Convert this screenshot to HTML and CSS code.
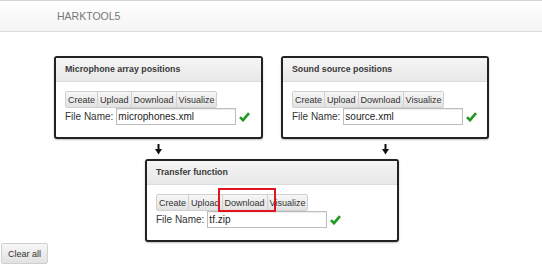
FILE: index.html
```html
<!DOCTYPE html>
<html lang="en">
<head>
<meta charset="UTF-8">
<title>HARKTOOL5</title>
<link rel="stylesheet" href="styles.css">
</head>
<body>
<div class="navbar">
<span class="brand">HARKTOOL5</span>
</div>

<div class="workspace">
<div class="row">
<div class="panel panel-left">
<div class="panel-heading">Microphone array positions</div>
<div class="panel-body">
<div class="btn-group">
<button class="btn">Create</button><button class="btn">Upload</button><button class="btn">Download</button><button class="btn">Visualize</button>
</div>
<div class="file-row">
<label>File Name:</label>
<input type="text" class="file-input" value="microphones.xml">
<svg class="check" width="11" height="10" viewBox="0 0 11 10"><path d="M1 5.2 L4 8.2 L10 1.2" fill="none" stroke="#229a22" stroke-width="2.6"/></svg>
</div>
</div>
</div>

<div class="panel panel-right">
<div class="panel-heading">Sound source positions</div>
<div class="panel-body">
<div class="btn-group">
<button class="btn">Create</button><button class="btn">Upload</button><button class="btn">Download</button><button class="btn">Visualize</button>
</div>
<div class="file-row">
<label>File Name:</label>
<input type="text" class="file-input" value="source.xml">
<svg class="check" width="11" height="10" viewBox="0 0 11 10"><path d="M1 5.2 L4 8.2 L10 1.2" fill="none" stroke="#229a22" stroke-width="2.6"/></svg>
</div>
</div>
</div>
</div>

<div class="arrows">
<div class="arrow-slot panel-left">
<svg width="7" height="11" viewBox="0 0 7 11"><rect x="2.5" y="0" width="2" height="6" fill="#111"/><path d="M0 5 L7 5 L3.5 10.5 Z" fill="#111"/></svg>
</div>
<div class="arrow-slot panel-right">
<svg width="7" height="11" viewBox="0 0 7 11"><rect x="2.5" y="0" width="2" height="6" fill="#111"/><path d="M0 5 L7 5 L3.5 10.5 Z" fill="#111"/></svg>
</div>
</div>

<div class="panel panel-tf">
<div class="panel-heading">Transfer function</div>
<div class="panel-body">
<div class="btn-group">
<button class="btn">Create</button><button class="btn">Upload</button><button class="btn">Download</button><button class="btn">Visualize</button>
</div>
<div class="file-row">
<label>File Name:</label>
<input type="text" class="file-input" value="tf.zip">
<svg class="check" width="11" height="10" viewBox="0 0 11 10"><path d="M1 5.2 L4 8.2 L10 1.2" fill="none" stroke="#229a22" stroke-width="2.6"/></svg>
</div>
</div>
<!-- annotation box round the Download button -->
<div class="highlight"></div>
</div>

<button class="btn clear-btn">Clear all</button>
</div>
</body>
</html>
```

FILE: styles.css
```css
body {
font-family: "Liberation Sans", Arial, sans-serif;
margin: 0;
padding: 0;
background: #fff;
color: #333;
}

.navbar {
height: 32px;
border-top: 1px solid #d4d4d4;
border-bottom: 1px solid #dcdcdc;
background: linear-gradient(#fff, #f4f4f4);
box-sizing: border-box;
}

.brand {
display: block;
padding-left: 57px;
line-height: 30px;
font-size: 10.5px;
color: #777;
}

.workspace {
padding-top: 24px;
}

.row,
.arrows {
display: flex;
gap: 18px;
padding-left: 54px;
}

.panel-left {
width: 209px;
}

.panel-right {
width: 208px;
}

.panel {
position: relative;
border: 2px solid #222;
border-radius: 3px;
box-shadow: 0 1px 2px rgba(0, 0, 0, 0.25);
box-sizing: border-box;
background: #fff;
}

.panel-heading {
height: 23px;
line-height: 23px;
padding-left: 9px;
font-size: 8.8px;
font-weight: bold;
color: #3a3a3a;
background: linear-gradient(#f5f5f5, #e8e8e8);
border-bottom: 1px solid #ddd;
}

.panel-body {
padding: 9px 10px 12px 9px;
}

.btn-group {
display: flex;
}

.btn {
font-family: "Liberation Sans", Arial, sans-serif;
font-size: 9px;
color: #333;
height: 17px;
padding: 0 2px;
margin: 0;
border: 1px solid #d0d0d0;
border-radius: 2px;
background: linear-gradient(#f7f7f7, #e2e2e2);
}

.btn-group .btn {
border-radius: 0;
margin-right: -1px;
}

.btn-group .btn:first-child {
border-radius: 2px 0 0 2px;
}

.btn-group .btn:last-child {
border-radius: 0 2px 2px 0;
}

.file-row {
display: flex;
align-items: center;
height: 17px;
font-size: 10px;
color: #333;
white-space: nowrap;
}

.file-row label {
margin-right: 3px;
flex-shrink: 0;
}

.file-input {
width: 120px;
height: 17px;
flex-shrink: 0;
box-sizing: border-box;
padding: 0 1px;
border: 1px solid #bdbdbd;
box-shadow: inset 0 1px 1px rgba(0, 0, 0, 0.08);
font-family: "Liberation Sans", Arial, sans-serif;
font-size: 10px;
color: #222;
}

.check {
margin-left: 3px;
flex-shrink: 0;
}

.arrows {
height: 20px;
align-items: center;
}

.arrow-slot {
display: flex;
justify-content: center;
}

.panel-tf {
width: 254px;
margin-left: 145px;
}

.highlight {
position: absolute;
left: 71px;
top: 27px;
width: 58px;
height: 24px;
border: 2px solid #e0141e;
box-sizing: border-box;
}

.clear-btn {
height: 21px;
margin: 1px 0 0 1px;
padding: 0 6px;
}
```
